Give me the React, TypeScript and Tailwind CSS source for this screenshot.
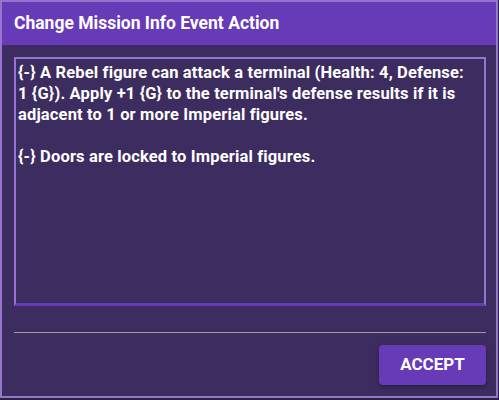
export default function App() {
  return (
    <div className="w-[499px] h-[400px] bg-[#2a2340]" style={{ fontFamily: "Roboto, 'Liberation Sans', sans-serif" }}>
      <div className="w-[498px] h-[398px] border-2 border-[#9575cd] bg-[#3d2c5f] flex flex-col">
        <div className="h-[43px] bg-[#673ab7] px-3 flex items-center text-white text-[17.5px] font-bold">
          Change Mission Info Event Action
        </div>
        <div className="pl-3 pr-[10px] pt-3 flex flex-col flex-1">
          <div className="h-[249px] border-2 border-b-[3px] border-[#9575cd] border-b-[#673ab7] px-[2px] pt-[3px] text-white text-[16.5px] tracking-[0.15px] font-bold leading-[21px]">
            <p>
              {"{-} A Rebel figure can attack a terminal (Health: 4, Defense:"}
              <br />
              {"1 {G}). Apply +1 {G} to the terminal's defense results if it is adjacent to 1 or more Imperial figures."}
            </p>
            <p className="mt-[21px]">{"{-} Doors are locked to Imperial figures."}</p>
          </div>
          <div className="mt-[26px] h-px bg-[#9e9e9e]" />
          <div className="flex justify-end pt-[12px] pr-0">
            <button className="w-[107px] h-[40px] rounded bg-[#673ab7] text-white text-[17px] font-bold shadow-[0_2px_4px_rgba(0,0,0,0.35)]">
              ACCEPT
            </button>
          </div>
        </div>
      </div>
    </div>
  );
}
